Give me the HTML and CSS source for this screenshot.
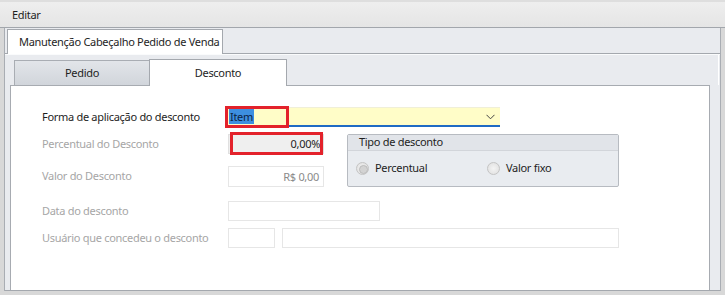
FILE: index.html
```html
<!DOCTYPE html>
<html lang="pt-BR">
<head>
    <meta charset="UTF-8">
    <title>Editar</title>
    <link rel="stylesheet" href="styles.css">
</head>
<body>
    <div class="window">
        <div class="title-bar">Editar</div>

        <div class="frame">
            <div class="outer-tabs">
                <div class="outer-strip">
                    <div class="outer-tab">Manutenção Cabeçalho Pedido de Venda</div>
                </div>

                <div class="outer-page">
                    <div class="inner-strip">
                        <div class="inner-tab">Pedido</div>
                        <div class="inner-tab active">Desconto</div>
                    </div>

                    <div class="inner-page">
                        <div class="form">
                            <div class="label">Forma de aplicação do desconto</div>
                            <div class="combo">
                                <span class="combo-text"><span class="selected">Item</span></span>
                                <svg class="chevron" width="9" height="6" viewBox="0 0 9 6">
                                    <path d="M0.5 0.8 L4.5 4.8 L8.5 0.8" fill="none" stroke="#444" stroke-width="1"/>
                                </svg>
                                <!-- marcação vermelha -->
                                <div class="mark mark-item"></div>
                            </div>

                            <div class="label disabled">Percentual do Desconto</div>
                            <div class="field field-percent">
                                0,00%
                                <div class="mark mark-percent"></div>
                            </div>

                            <div class="group">
                                <div class="group-title">Tipo de desconto</div>
                                <div class="group-body">
                                    <label class="radio checked"><span class="dot"></span>Percentual</label>
                                    <label class="radio"><span class="dot"></span>Valor fixo</label>
                                </div>
                            </div>

                            <div class="label disabled">Valor do Desconto</div>
                            <div class="field field-value">R$ 0,00</div>

                            <div class="label disabled">Data do desconto</div>
                            <div class="field field-date"></div>

                            <div class="label disabled">Usuário que concedeu o desconto</div>
                            <div class="user-fields">
                                <div class="field field-code"></div>
                                <div class="field field-name"></div>
                            </div>
                        </div>
                    </div>
                </div>
            </div>
        </div>
    </div>
</body>
</html>
```

FILE: styles.css
```css
* {
    margin: 0;
    padding: 0;
    box-sizing: border-box;
}
body {
    font-family: "Noto Sans", "Open Sans", sans-serif;
    font-size: 11px;
    letter-spacing: -0.3px;
    color: #1e1e1e;
    background: #d8d8d8;
}
.window {
    width: 725px;
    height: 295px;
    background: #d8d8d8;
    display: flex;
    flex-direction: column;
}
.title-bar {
    height: 28px;
    padding: 5px 0 0 12px;
    border-top: 2px solid #dedede;
    border-bottom: 1px solid #a2a6ac;
    background: linear-gradient(#eeeeee, #e5e5e5);
    line-height: 16px;
}
.frame {
    flex: 1;
    padding: 0 4px 4px 4px;
}
.outer-tabs {
    height: 100%;
    background: #e9ebef;
    border-left: 1px solid #a9adb3;
    border-right: 1px solid #a9adb3;
    display: flex;
    flex-direction: column;
}
.outer-strip {
    height: 25px;
    padding: 1px 0 0 2px;
    display: flex;
}
.outer-tab {
    width: 216px;
    height: 25px;
    padding: 4px 0 0 11px;
    background: #fff;
    border: 1px solid #a4a8ae;
    border-bottom: none;
    position: relative;
    z-index: 1;
    line-height: 16px;
    white-space: nowrap;
}
.outer-page {
    flex: 1;
    border-top: 1px solid #a4a8ae;
    border-bottom: 1px solid #a4a8ae;
    padding: 1px 4px 0 5px;
    display: flex;
    flex-direction: column;
    box-shadow: inset 0 1px 0 #fafbfc;
}
.inner-strip {
    height: 30px;
    padding-left: 4px;
    display: flex;
    align-items: flex-end;
    border-right: 1px solid #fff;
    margin-right: -3px;
}
.inner-tab {
    width: 136px;
    height: 25px;
    padding-top: 4px;
    text-align: center;
    line-height: 16px;
    border: 1px solid #a9adb3;
    border-bottom: none;
    background: linear-gradient(#e2e5e9, #d1d5db);
}
.inner-tab.active {
    width: 138px;
    height: 27px;
    padding-top: 5px;
    margin-left: -1px;
    background: #fff;
    position: relative;
    z-index: 1;
    margin-bottom: -1px;
    border-color: #a4a8ae;
}
.inner-page {
    flex: 1;
    background: #fff;
    border: 1px solid #a7abb1;
    border-bottom: none;
    margin-right: 6px;
    padding: 21px 0 0 31px;
}
.form {
    display: grid;
    grid-template-columns: 186px 96px 296px;
    grid-template-rows: 27px 32px 35px 27px 20px;
}
.label {
    line-height: 20px;
    white-space: nowrap;
}
.label.disabled {
    color: #a6a6a6;
}
.field {
    height: 20px;
    border: 1px solid #e6e6e6;
    background: #fff;
    text-align: right;
    padding-right: 3px;
    line-height: 18px;
    position: relative;
}
.combo {
    grid-column: 2 / 4;
    width: 273px;
    height: 20px;
    margin-left: -1px;
    background: #fffdc8;
    border-top: 1px solid #f0efd8;
    border-bottom: 2px solid #1f6ac4;
    position: relative;
    display: flex;
    align-items: center;
    justify-content: space-between;
    padding: 0 5px 0 2px;
}
.combo-text {
    line-height: 14px;
}
.selected {
    background: #3d8fe0;
    color: #0c1f44;
    padding: 0 1px;
}
.chevron {
    display: block;
}
.field-percent {
    background: #efefef;
    color: #1e1e1e;
    border-color: #e0e0e0;
}
.field-value {
    height: 21px;
    color: #8a8a8a;
    padding-right: 4px;
    line-height: 19px;
}
.field-date {
    grid-column: 2 / 4;
    width: 152px;
}
.user-fields {
    grid-column: 2 / 4;
    display: flex;
    gap: 7px;
}
.field-code {
    width: 47px;
}
.field-name {
    width: 337px;
}
.mark {
    position: absolute;
    border: 3px solid #e3222b;
    pointer-events: none;
}
.mark-item {
    left: -2px;
    top: -2px;
    width: 64px;
    height: 22px;
}
.mark-percent {
    left: 1px;
    top: -3px;
    width: 93px;
    height: 23px;
}
.group {
    grid-column: 3;
    grid-row: 2 / 4;
    margin-left: 23px;
    width: 272px;
    height: 53px;
    border: 1px solid #b7bbc1;
    border-radius: 2px;
    background: #e9ecf0;
}
.group-title {
    height: 16px;
    padding-left: 11px;
    line-height: 14px;
    background: #e1e4e9;
    border-bottom: 1px solid #d2d5da;
}
.group-body {
    display: flex;
    padding: 9px 0 0 8px;
}
.radio {
    display: flex;
    align-items: center;
    gap: 6px;
    width: 131px;
    color: #1e1e1e;
    line-height: 16px;
}
.dot {
    width: 13px;
    height: 13px;
    border-radius: 50%;
    border: 1px solid #c4c4c4;
    background: radial-gradient(#f4f4f4, #dedede);
    position: relative;
}
.radio.checked .dot::after {
    content: "";
    position: absolute;
    left: 2px;
    top: 2px;
    width: 7px;
    height: 7px;
    border-radius: 50%;
    background: #d3d3d3;
    border: 1px solid #bcbcbc;
}
```
